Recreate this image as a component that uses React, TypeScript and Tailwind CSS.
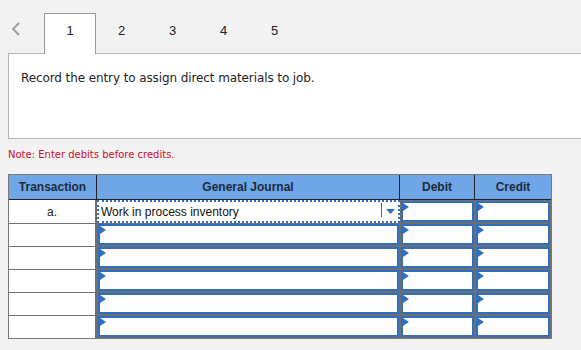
import React from 'react';

const rows = [0, 1, 2, 3, 4, 5];

function Flag() {
  return (
    <svg className="absolute left-0 top-0" width="6" height="8" viewBox="0 0 6 8">
      <polygon points="0,0 6,4 0,8" fill="#2f6fc0" />
    </svg>
  );
}

function InputCell() {
  return (
    <div className="bg-[#6f6f6f] p-px h-full">
      <div className="relative h-full bg-white border-2 border-[#2f6fc0]">
        <Flag />
      </div>
    </div>
  );
}

export default function App() {
  return (
    <div className="w-[581px] h-[350px] bg-[#f2f2f2] overflow-hidden relative font-['Liberation_Sans',Arial,sans-serif]">
      {/* tabs */}
      <div className="flex items-end h-[53px] pt-[13px]">
        <div className="w-[44px] h-[40px] flex items-start pl-[11px] pt-[9px]">
          <svg width="10" height="14" viewBox="0 0 10 14">
            <polyline points="8,1 2,7 8,13" fill="none" stroke="#9a9a9a" strokeWidth="1.8" />
          </svg>
        </div>
        <div className="w-[52px] h-[41px] bg-white border border-b-0 border-[#999] flex justify-center pt-[7px] text-[13px] text-[#222] relative z-10 -mb-px">
          1
        </div>
        {[2, 3, 4, 5].map(n => (
          <div key={n} className="w-[51px] h-[40px] flex justify-center pt-[8px] text-[13px] text-[#222]">
            {n}
          </div>
        ))}
      </div>

      {/* question box */}
      <div className="ml-[8px] w-[600px] h-[86px] bg-white border border-[#b5b5b5] px-[12px] pt-[15px]">
        <p className="font-['DejaVu_Sans',Verdana,sans-serif] text-[12px] tracking-[-0.1px] text-[#222]">
          Record the entry to assign direct materials to job.
        </p>
      </div>

      <p className="ml-[8px] mt-[8px] font-['DejaVu_Sans',Verdana,sans-serif] text-[10px] text-[#c8102e]">
        Note: Enter debits before credits.
      </p>

      {/* journal table */}
      <div className="absolute left-[8px] top-[174px] w-[544px] border border-[#777] bg-[#6f6f6f]">
        <div className="grid grid-cols-[88px_303px_75px_76px] h-[25px] bg-[#6ea6e8] border-b border-[#222] text-[12px] font-bold text-[#1e2a38]">
          <div className="flex items-center justify-center border-r border-[#222]">Transaction</div>
          <div className="flex items-center justify-center border-r border-[#222]">General Journal</div>
          <div className="flex items-center justify-center border-r border-[#222]">Debit</div>
          <div className="flex items-center justify-center">Credit</div>
        </div>
        {rows.map(i => (
          <div key={i} className="grid grid-cols-[88px_303px_75px_76px] h-[23px]">
            <div className={`bg-white border-r-2 border-[#6f6f6f] flex items-center justify-center text-[12px] text-[#222] ${i > 0 ? 'border-t border-t-[#6f6f6f]' : ''}`}>
              {i === 0 ? 'a.' : ''}
            </div>
            {i === 0 ? (
              <div className="relative bg-white border-2 border-dotted border-[#2f6fc0] flex items-center pl-[2px] text-[12px] text-[#111]">
                Work in process inventory
                <div className="absolute right-[16px] top-[1px] bottom-[4px] w-px bg-[#2f6fc0]" />
                <svg className="absolute right-[3px] top-[7px]" width="9" height="5" viewBox="0 0 9 5">
                  <polygon points="0,0 9,0 4.5,5" fill="#2f6fc0" />
                </svg>
              </div>
            ) : (
              <InputCell />
            )}
            <InputCell />
            <InputCell />
          </div>
        ))}
      </div>
    </div>
  );
}
